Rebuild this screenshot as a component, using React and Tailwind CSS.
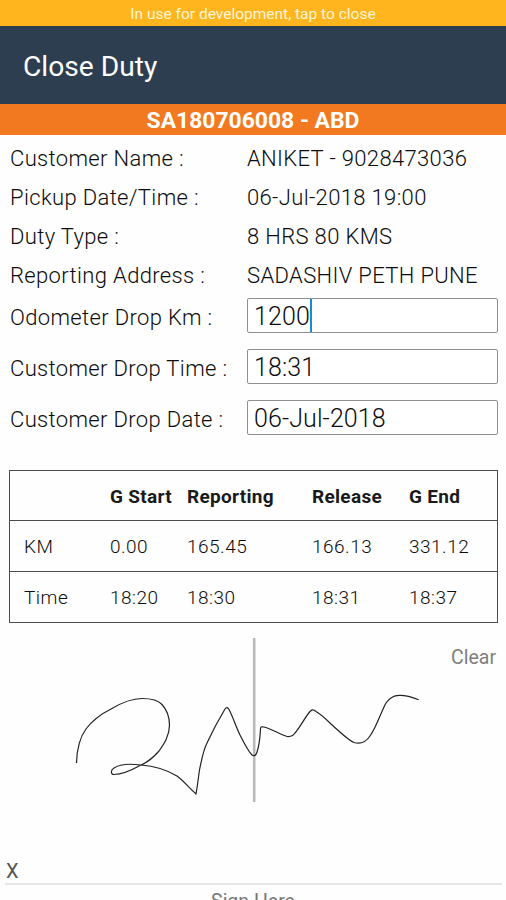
const details = [
  ['Customer Name :', 'ANIKET - 9028473036'],
  ['Pickup Date/Time :', '06-Jul-2018 19:00'],
  ['Duty Type :', '8 HRS 80 KMS'],
  ['Reporting Address :', 'SADASHIV PETH PUNE'],
];

const fields = [
  { label: 'Odometer Drop Km :', value: '1200', focused: true },
  { label: 'Customer Drop Time :', value: '18:31' },
  { label: 'Customer Drop Date :', value: '06-Jul-2018' },
];

const rows = [
  ['KM', '0.00', '165.45', '166.13', '331.12'],
  ['Time', '18:20', '18:30', '18:31', '18:37'],
];

const columns = 'grid grid-cols-[86px_77px_125px_97px_1fr] items-center pl-[14px]';

function Signature() {
  return (
    <svg className="absolute inset-0" width="506" height="180" viewBox="0 630 506 180" fill="none">
      <path d="M254.2 638V802" stroke="#b9b9b9" strokeWidth="2.6" />
      <path
        d="M76.5 763C77 746 80 737 86 729C92 721 101 714 111 709C121 703 131 698.5 142 698.5C152 698.5 158 700 162 704.500C167 710 169.500 717 169.500 725C169.500 736 164 744 159 751C153 758 148 762 141 765C132 770 121 774.500 114 774.500C110.500 774.500 110.500 770 114 768C119 764.500 129 763.500 141 765C154 766 167 770 177 776C184 781 189 788 196 794C197.500 786 198 780 199.500 770C202 758 203 751 207 743C212 732 219 719 225 709C226.500 707 227.500 707 229 709.500C233 717 236 727 240 735C244 743 248 751 252 755C254 756.500 256 755.500 257 752C260 743 260 736 260.500 729C260.500 727 261 726.500 264 727C273 729.500 280 734.500 287 736.500C291 737 293 736 295 733C301 726 305 717 310.500 711C312 709.500 314 709.500 316 711.500C322 715 326 719 331 724C340 732 348 740 354 742.500C361 744.500 366 742 370 736C377 726 381 712 386 703C390 697 394 695.500 399 695.300C406 695 412 697 418.700 699.700"
        stroke="#222"
        strokeWidth="1.200"
        strokeLinejoin="round"
      />
    </svg>
  );
}

export default function App() {
  return (
    <div className="flex h-[900px] w-[506px] flex-col overflow-hidden bg-[#fefefe] font-['Roboto',sans-serif] text-[#0c0c0c]">
      <div className="flex h-[26px] shrink-0 items-center justify-center bg-[#ffb61e] pt-[4px] text-[15.5px] leading-none text-[#fff4d6]">
        In use for development, tap to close
      </div>
      <header className="flex h-[78px] shrink-0 items-center bg-[#2d3e50] pt-[4px] pl-[23px] text-[28.200px] text-white">
        Close Duty
      </header>
      <div className="flex h-[31px] shrink-0 items-center justify-center bg-[#f2791f] pt-[4px] text-[22.900px] font-bold leading-none text-white">
        SA180706008 - ABD
      </div>

      <main className="flex flex-col text-[22px] leading-none">
        <dl className="flex flex-col pt-[4px] font-[350]">
          {details.map(([label, value]) => (
            <div key={label} className="flex h-[39px] items-center pl-[10px]">
              <dt className="w-[237px] tracking-[0.35px]">{label}</dt>
              <dd className="tracking-[0.35px]">{value}</dd>
            </div>
          ))}
        </dl>
        <div className="mt-[3px] flex flex-col gap-4 font-[350]">
          {fields.map(({ label, value, focused }) => (
            <div key={label} className="flex h-[35px] items-center pl-[10px]">
              <label className="w-[237px] pt-[4px] tracking-[0.35px]">{label}</label>
              <div className="flex h-[35px] w-[251px] items-center rounded-[2px] border border-[#8f8f8f] bg-white pl-[6px] text-[25px]">
                <span className="pt-[2px] tracking-[0.1px]">{value}</span>
                {focused && <span className="h-[33px] w-[2.500px] bg-[#1b8bd0]" />}
              </div>
            </div>
          ))}
        </div>

        <section className="mt-[35px] ml-[9px] h-[153px] w-[489px] border border-[#4c4c4c] text-[19px]">
          <div className={`${columns} h-[50px] border-b border-[#4c4c4c] pt-[2px] font-bold tracking-[0.3px] text-[#1a1a1a]`}>
            <span />
            <span>G Start</span>
            <span>Reporting</span>
            <span>Release</span>
            <span>G End</span>
          </div>
          {rows.map((row, i) => (
            <div
              key={row[0]}
              className={`${columns} pt-px font-[350] tracking-[0.5px] ${i === 0 ? 'h-[51px] border-b border-[#4c4c4c]' : 'h-[50px]'}`}
            >
              {row.map((cell, j) => (
                <span key={j}>{cell}</span>
              ))}
            </div>
          ))}
        </section>
      </main>

      <section className="mt-[7px] flex h-[270px] shrink-0 flex-col leading-none">
        <div className="relative h-[231px] shrink-0 text-right">
          <Signature />
          <button className="relative mt-[18px] mr-[10px] text-[19.500px] leading-none text-[#7f7f7f]">Clear</button>
        </div>
        <div className="ml-[5px] flex h-[24px] w-[497px] shrink-0 items-end border-b-2 border-[#e6e6e6] pb-[2px] pl-px text-[20px] text-[#555]">
          X
        </div>
        <div className="shrink-0 pt-[7px] text-center text-[19.500px] text-[#777]">Sign Here</div>
      </section>
    </div>
  );
}
